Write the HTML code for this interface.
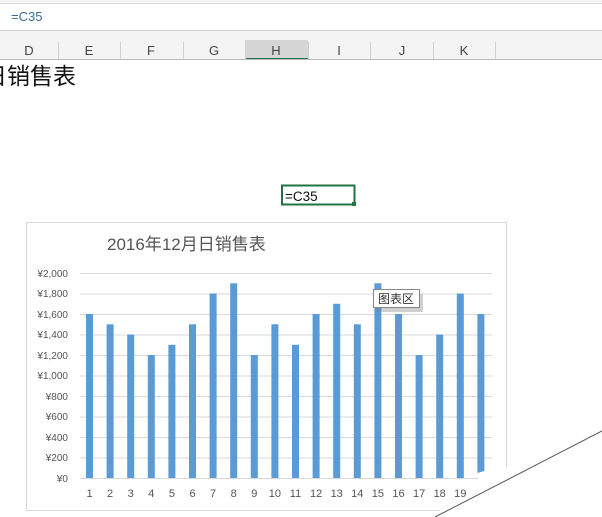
<!DOCTYPE html>
<html><head><meta charset="utf-8"><style>
body{margin:0;width:602px;height:517px;overflow:hidden;background:#fff;font-family:"Liberation Sans","Noto Sans CJK SC",sans-serif;position:relative}
</style></head><body>
<svg width="602" height="517" style="position:absolute;left:0;top:0" font-family="Liberation Sans, Noto Sans CJK SC, sans-serif">
<rect x="0" y="0" width="602" height="40" fill="#f4f4f4"/>
<rect x="0" y="4" width="602" height="26" fill="#fff"/>
<line x1="0" y1="30.5" x2="602" y2="30.5" stroke="#cfcfcf"/>
<line x1="0" y1="3.5" x2="602" y2="3.5" stroke="#dcdcdc"/>
<text x="11" y="21" font-size="13" fill="#3a6e9c">=C35</text>
<rect x="0" y="40" width="602" height="20" fill="#f4f4f4"/>
<rect x="245" y="40" width="63" height="19" fill="#d6d6d6"/>
<line x1="245" y1="59" x2="308" y2="59" stroke="#217346" stroke-width="2"/>
<line x1="0" y1="59.5" x2="602" y2="59.5" stroke="#bbb"/>
<g stroke="#d0d0d0"><line x1="58.5" y1="42" x2="58.5" y2="59"/><line x1="120.5" y1="42" x2="120.5" y2="59"/><line x1="183.5" y1="42" x2="183.5" y2="59"/><line x1="245.5" y1="42" x2="245.5" y2="59"/><line x1="308.5" y1="42" x2="308.5" y2="59"/><line x1="370.5" y1="42" x2="370.5" y2="59"/><line x1="433.5" y1="42" x2="433.5" y2="59"/><line x1="495.5" y1="42" x2="495.5" y2="59"/></g>
<g font-size="13" fill="#444" text-anchor="middle"><text x="29" y="55">D</text><text x="89" y="55">E</text><text x="151" y="55">F</text><text x="214" y="55">G</text><text x="276" y="55">H</text><text x="339" y="55">I</text><text x="402" y="55">J</text><text x="464" y="55">K</text></g>
<text x="-16" y="84" font-size="23" fill="#111">日销售表</text>
<rect x="282" y="185.5" width="72.5" height="19" fill="#fff" stroke="#217346" stroke-width="2"/>
<rect x="352" y="202" width="4" height="4" fill="#217346"/>
<text x="285" y="201" font-size="13.5" fill="#111">=C35</text>
<polyline points="26.5,510.5 26.5,222.5 506.5,222.5 506.5,467" fill="none" stroke="#d9d9d9"/>
<line x1="26.5" y1="510.5" x2="440" y2="510.5" stroke="#d9d9d9"/>
<text x="107" y="250" font-size="17" fill="#555">2016年12月日销售表</text>
<g stroke="#d9d9d9">
<line x1="80" y1="273.5" x2="492" y2="273.5"/><line x1="80" y1="294" x2="492" y2="294"/><line x1="80" y1="314.5" x2="492" y2="314.5"/><line x1="80" y1="335" x2="492" y2="335"/><line x1="80" y1="355.5" x2="492" y2="355.5"/><line x1="80" y1="376" x2="492" y2="376"/><line x1="80" y1="396.5" x2="492" y2="396.5"/><line x1="80" y1="417" x2="492" y2="417"/><line x1="80" y1="437.5" x2="492" y2="437.5"/><line x1="80" y1="458" x2="492" y2="458"/><line x1="80" y1="478.5" x2="478" y2="478.5"/>
</g>
<g font-size="10" fill="#555" text-anchor="end">
<text x="68" y="277">¥2,000</text><text x="68" y="297">¥1,800</text><text x="68" y="318">¥1,600</text><text x="68" y="338">¥1,400</text><text x="68" y="359">¥1,200</text><text x="68" y="379">¥1,000</text><text x="68" y="400">¥800</text><text x="68" y="420">¥600</text><text x="68" y="441">¥400</text><text x="68" y="461">¥200</text><text x="68" y="482">¥0</text>
</g>
<g fill="#5b9bd5">
<rect x="86" y="314" width="7" height="164"/><rect x="106.6" y="324.3" width="7" height="153.7"/><rect x="127.2" y="334.5" width="7" height="143.5"/><rect x="147.8" y="355" width="7" height="123"/><rect x="168.4" y="344.8" width="7" height="133.2"/><rect x="189" y="324.3" width="7" height="153.7"/><rect x="209.6" y="293.5" width="7" height="184.5"/><rect x="230.2" y="283.3" width="7" height="194.7"/><rect x="250.8" y="355" width="7" height="123"/><rect x="271.4" y="324.3" width="7" height="153.7"/><rect x="292" y="344.8" width="7" height="133.2"/><rect x="312.6" y="314" width="7" height="164"/><rect x="333.2" y="303.8" width="7" height="174.2"/><rect x="353.8" y="324.3" width="7" height="153.7"/><rect x="374.4" y="283.3" width="7" height="194.7"/><rect x="395" y="314" width="7" height="164"/><rect x="415.6" y="355" width="7" height="123"/><rect x="436.2" y="334.5" width="7" height="143.5"/><rect x="456.8" y="293.5" width="7" height="184.5"/><polygon points="477.4,314 484.4,314 484.4,471 477.4,473"/>
</g>
<g font-size="11" fill="#555" text-anchor="middle">
<text x="89.5" y="497">1</text><text x="110" y="497">2</text><text x="130.7" y="497">3</text><text x="151.3" y="497">4</text><text x="171.9" y="497">5</text><text x="192.5" y="497">6</text><text x="213.1" y="497">7</text><text x="233.7" y="497">8</text><text x="254.3" y="497">9</text><text x="274.9" y="497">10</text><text x="295.5" y="497">11</text><text x="316.1" y="497">12</text><text x="336.7" y="497">13</text><text x="357.3" y="497">14</text><text x="377.9" y="497">15</text><text x="398.5" y="497">16</text><text x="419.1" y="497">17</text><text x="439.7" y="497">18</text><text x="460.3" y="497">19</text>
</g>
<rect x="375" y="292" width="46" height="18" fill="#777" opacity="0.35" transform="translate(2,2)"/>
<rect x="373.5" y="289.5" width="46" height="18" fill="#fff" stroke="#888"/>
<text x="378" y="303" font-size="12" fill="#333">图表区</text>
<line x1="435" y1="517" x2="602" y2="431" stroke="#555" stroke-width="1"/>
</svg>
</body></html>
